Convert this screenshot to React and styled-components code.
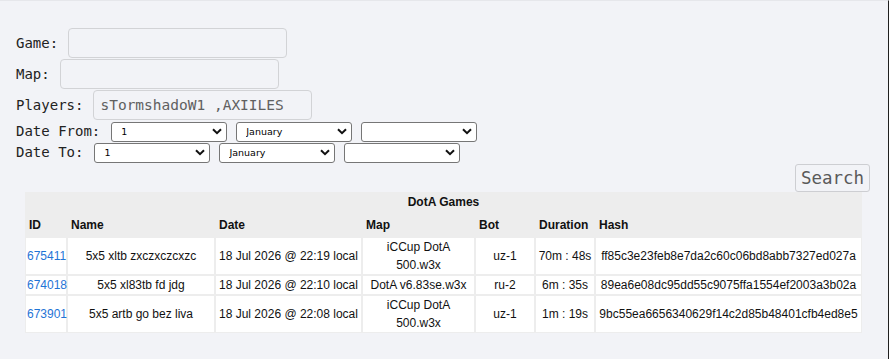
import React from 'react';
import styled, { createGlobalStyle } from 'styled-components';

const GlobalStyle = createGlobalStyle`
  html, body {
    margin: 0;
    padding: 0;
    background: #ffffff;
  }
`;

const mono = `'DejaVu Sans Mono', 'Liberation Mono', monospace`;
const sans = `'Liberation Sans', Arial, sans-serif`;

const Page = styled.div`
  box-sizing: border-box;
  width: 889px;
  min-height: 359px;
  background: #f2f3f7;
  border-top: 1px solid #e6e7eb;
  border-right: 1px solid #1f1f1f;
  padding: 27px 18px 0 16px;
`;

const FieldRow = styled.div`
  display: flex;
  align-items: center;
  gap: 10px;
  height: 30px;
  margin-bottom: 1px;
`;

const DateRow = styled.div`
  display: flex;
  align-items: center;
  height: 20px;
  margin-top: 1px;
`;

const Label = styled.label`
  font-family: ${mono};
  font-size: 14px;
  color: #222222;
  white-space: pre;
  margin-right: ${({ $space }) => $space || 0}px;
`;

const TextInput = styled.input`
  box-sizing: border-box;
  width: 219px;
  height: 30px;
  border: 1px solid #d2d3d6;
  border-radius: 4px;
  background: transparent;
  padding: 0 6px;
  font-family: ${mono};
  font-size: 14.5px;
  color: #606060;
  outline: none;
`;

const SelectGroup = styled.div`
  display: flex;
  gap: 9px;
`;

const SelectBox = styled.div`
  position: relative;
  width: 116px;
  height: 20px;
`;

const Select = styled.select`
  box-sizing: border-box;
  appearance: none;
  width: 100%;
  height: 100%;
  border: 1px solid #767676;
  border-radius: 3px;
  background: #ffffff;
  padding: 0 0 0 9px;
  font-family: 'DejaVu Sans', ${sans};
  font-size: 9.5px;
  color: #000000;
`;

const Chevron = styled.svg`
  position: absolute;
  right: 5px;
  top: 7px;
  pointer-events: none;
`;

const ButtonRow = styled.div`
  display: flex;
  justify-content: flex-end;
  margin-top: 2px;
`;

const SearchButton = styled.button`
  box-sizing: border-box;
  width: 75px;
  height: 28px;
  border: 1px solid #cdced2;
  border-radius: 3px;
  background: #f2f3f7;
  font-family: ${mono};
  font-size: 17.5px;
  color: #5a5a5a;
  padding: 0;
`;

const Table = styled.table`
  table-layout: fixed;
  width: 837px;
  margin: 0 8px 0 9px;
  border-collapse: separate;
  border-spacing: 0;
  background: #ededed;
  font-family: ${sans};
  font-size: 12px;
  color: #111111;
`;

const Caption = styled.caption`
  background: #ededed;
  font-weight: bold;
  height: 20px;
  line-height: 20px;
  text-align: center;
`;

const Th = styled.th`
  text-align: left;
  font-weight: bold;
  padding: 1px 3px 0;
  line-height: 22px;
  border: 1px solid #ededed;
  white-space: nowrap;
`;

const Td = styled.td`
  background: #ffffff;
  border: 1px solid #ededed;
  padding: 0 1px;
  line-height: 18px;
  text-align: center;
  white-space: ${({ $wrap }) => ($wrap ? 'normal' : 'nowrap')};
`;

const IdLink = styled.a`
  color: #1f74d6;
  text-decoration: none;
`;

const days = ['1'];
const months = ['January'];

function DateSelect({ value }) {
  return (
    <SelectBox>
      <Select defaultValue={value}>
        <option value={value}>{value}</option>
      </Select>
      <Chevron width="10" height="7" viewBox="0 0 10 7">
        <path d="M1 1.2 L5 5.2 L9 1.2" fill="none" stroke="#111" strokeWidth="2" />
      </Chevron>
    </SelectBox>
  );
}

function DateFields() {
  return (
    <SelectGroup>
      <DateSelect value={days[0]} />
      <DateSelect value={months[0]} />
      <DateSelect value="" />
    </SelectGroup>
  );
}

const games = [
  {
    id: '675411',
    name: '5x5 xltb zxczxczcxzc',
    date: '18 Jul 2026 @ 22:19 local',
    map: 'iCCup DotA 500.w3x',
    bot: 'uz-1',
    duration: '70m : 48s',
    hash: 'ff85c3e23feb8e7da2c60c06bd8abb7327ed027a'
  },
  {
    id: '674018',
    name: '5x5 xl83tb fd jdg',
    date: '18 Jul 2026 @ 22:10 local',
    map: 'DotA v6.83se.w3x',
    bot: 'ru-2',
    duration: '6m : 35s',
    hash: '89ea6e08dc95dd55c9075ffa1554ef2003a3b02a'
  },
  {
    id: '673901',
    name: '5x5 artb go bez liva',
    date: '18 Jul 2026 @ 22:08 local',
    map: 'iCCup DotA 500.w3x',
    bot: 'uz-1',
    duration: '1m : 19s',
    hash: '9bc55ea6656340629f14c2d85b48401cfb4ed8e5'
  }
];

const columns = [
  ['ID', 42],
  ['Name', 148],
  ['Date', 147],
  ['Map', 113],
  ['Bot', 60],
  ['Duration', 60],
  ['Hash', 267]
];

export default function App() {
  return (
    <Page>
      <GlobalStyle />
      <FieldRow>
        <Label>Game:</Label>
        <TextInput />
      </FieldRow>
      <FieldRow>
        <Label>Map:</Label>
        <TextInput />
      </FieldRow>
      <FieldRow>
        <Label>Players:</Label>
        <TextInput defaultValue="sTormshadoW1 ,AXIILES" />
      </FieldRow>
      <DateRow>
        <Label $space={11}>Date From:</Label>
        <DateFields />
      </DateRow>
      <DateRow>
        <Label $space={11}>Date To:</Label>
        <DateFields />
      </DateRow>
      <ButtonRow>
        <SearchButton>Search</SearchButton>
      </ButtonRow>
      <Table>
        <Caption>DotA Games</Caption>
        <colgroup>
          {columns.map(([name, width]) => (
            <col key={name} style={{ width }} />
          ))}
        </colgroup>
        <thead>
          <tr>
            {columns.map(([name]) => (
              <Th key={name}>{name}</Th>
            ))}
          </tr>
        </thead>
        <tbody>
          {games.map(game => (
            <tr key={game.id}>
              <Td>
                <IdLink href="#">{game.id}</IdLink>
              </Td>
              <Td>{game.name}</Td>
              <Td>{game.date}</Td>
              <Td $wrap>{game.map}</Td>
              <Td>{game.bot}</Td>
              <Td>{game.duration}</Td>
              <Td>{game.hash}</Td>
            </tr>
          ))}
        </tbody>
      </Table>
    </Page>
  );
}
